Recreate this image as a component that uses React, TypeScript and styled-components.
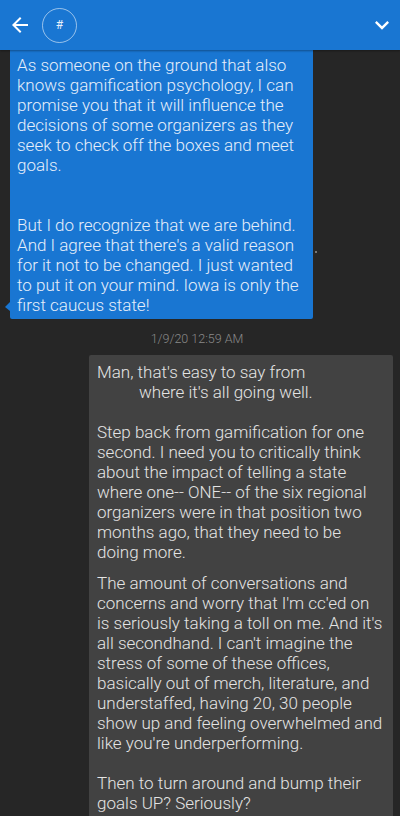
import React from 'react';
import styled, { createGlobalStyle } from 'styled-components';
import { MdArrowBack, MdKeyboardArrowDown } from 'react-icons/md';

const GlobalStyle = createGlobalStyle`
  html, body {
    margin: 0;
    padding: 0;
    background: #262626;
  }
  body {
    font-family: Roboto, "Liberation Sans", sans-serif;
  }
`;

const Screen = styled.div`
  width: 400px;
  height: 816px;
  overflow: hidden;
  background: #262626;
  display: flex;
  flex-direction: column;
`;

const Header = styled.header`
  height: 50px;
  flex-shrink: 0;
  background: #1976d2;
  display: flex;
  align-items: center;
  padding: 0 4px 0 8px;
  box-shadow: 0 1px 2px rgba(0, 0, 0, 0.35);
  position: relative;
  z-index: 1;
  color: #fff;
`;

const IconButton = styled.div<{ $size?: number }>`
  width: ${(p) => p.$size || 24}px;
  height: ${(p) => p.$size || 24}px;
  display: flex;
  align-items: center;
  justify-content: center;
`;

const Avatar = styled.div`
  width: 33px;
  height: 33px;
  margin-left: 10px;
  border-radius: 50%;
  border: 1px solid rgba(255, 255, 255, 0.55);
  display: flex;
  align-items: center;
  justify-content: center;
  font-size: 12px;
  color: #e8f1fb;
`;

const Spacer = styled.div`
  flex: 1;
`;

const Thread = styled.main`
  flex: 1;
  display: flex;
  flex-direction: column;
  align-items: flex-start;
`;

const Bubble = styled.div<{ $mine?: boolean }>`
  position: relative;
  box-sizing: border-box;
  width: ${(p) => (p.$mine ? '304px' : '303px')};
  margin-left: ${(p) => (p.$mine ? '89px' : '10px')};
  padding: ${(p) => (p.$mine ? '7px 8px 0 8px' : '5px 7px 4px 7px')};
  background: ${(p) => (p.$mine ? '#424242' : '#1976d2')};
  color: ${(p) => (p.$mine ? '#e4e4e4' : '#e6eefa')};
  border-radius: ${(p) => (p.$mine ? '2px 2px 0 0' : '0 0 2px 2px')};
  font-size: 17px;
  font-weight: 300;
  line-height: 20px;
  white-space: pre;
  ${(p) => (p.$mine ? 'flex: 1;' : '')}

  ${(p) =>
    p.$mine
      ? ''
      : `
  &::before {
    content: '';
    position: absolute;
    left: -5px;
    bottom: 8px;
    border-top: 5px solid transparent;
    border-bottom: 4px solid transparent;
    border-right: 5px solid #1976d2;
  }`}
`;

const Paragraph = styled.p`
  margin: 0 0 11px 0;
`;

const Indent = styled.span`
  display: block;
  padding-left: 42px;
`;

const ReadDot = styled.span`
  position: absolute;
  right: -4px;
  top: 201px;
  width: 2px;
  height: 2px;
  background: #777;
`;

const Timestamp = styled.div`
  align-self: center;
  margin: 12px 0 8px 0;
  font-size: 12.5px;
  font-weight: 300;
  line-height: 16px;
  color: #8a8a8a;
  padding-right: 6px;
`;

function App() {
  return (
    <Screen>
      <GlobalStyle />
      <Header>
        <IconButton>
          <MdArrowBack size={24} />
        </IconButton>
        <Avatar>#</Avatar>
        <Spacer />
        <IconButton $size={28}>
          <MdKeyboardArrowDown size={28} />
        </IconButton>
      </Header>
      <Thread>
        <Bubble>
          {`As someone on the ground that also
knows gamification psychology, I can
promise you that it will influence the
decisions of some organizers as they
seek to check off the boxes and meet
goals.


But I do recognize that we are behind.
And I agree that there's a valid reason
for it not to be changed. I just wanted
to put it on your mind. Iowa is only the
first caucus state!`}
          <ReadDot />
        </Bubble>
        <Timestamp>1/9/20 12:59 AM</Timestamp>
        <Bubble $mine>
          <Paragraph>
            {`Man, that's easy to say from`}
            <Indent>where it's all going well.</Indent>
            {`
Step back from gamification for one
second. I need you to critically think
about the impact of telling a state
where one-- ONE-- of the six regional
organizers were in that position two
months ago, that they need to be
doing more.`}
          </Paragraph>
          <Paragraph>
            {`The amount of conversations and
concerns and worry that I'm cc'ed on
is seriously taking a toll on me. And it's
all secondhand. I can't imagine the
stress of some of these offices,
basically out of merch, literature, and
understaffed, having 20, 30 people
show up and feeling overwhelmed and
like you're underperforming.

Then to turn around and bump their
goals UP? Seriously?`}
          </Paragraph>
        </Bubble>
      </Thread>
    </Screen>
  );
}

export default App;
